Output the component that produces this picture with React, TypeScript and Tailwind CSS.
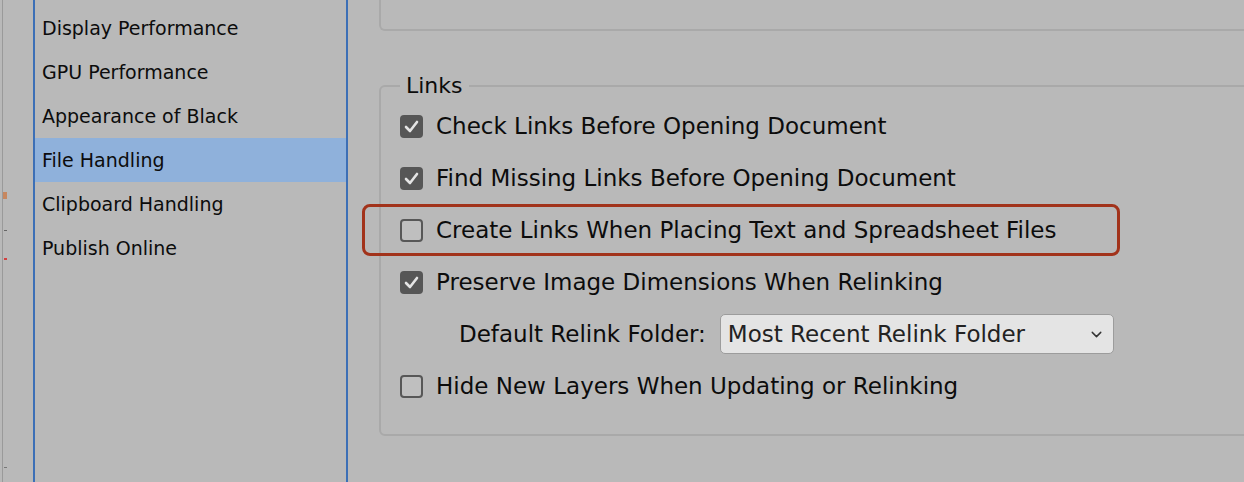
import { ChevronDown } from "lucide-react";

const sections = [
  "Display Performance",
  "GPU Performance",
  "Appearance of Black",
  "File Handling",
  "Clipboard Handling",
  "Publish Online",
];

function CheckBox({ checked }: { checked?: boolean }) {
  return checked ? (
    <span className="w-[23px] h-[23px] rounded-[4px] bg-[#565656] flex items-center justify-center shrink-0">
      <svg width="15" height="13" viewBox="0 0 15 13" fill="none">
        <path d="M2 7 L6 11 L13 2" stroke="#e4e4e4" strokeWidth="2.6" strokeLinecap="round" strokeLinejoin="round" />
      </svg>
    </span>
  ) : (
    <span className="w-[23px] h-[23px] rounded-[4px] border-2 border-[#575757] bg-[#bfbfbf] shrink-0" />
  );
}

function Option({ checked, label, marked }: { checked?: boolean; label: string; marked?: boolean }) {
  return (
    <div className="relative flex items-center h-[52px] gap-[13px]">
      <CheckBox checked={checked} />
      <span>{label}</span>
      {/* annotation box drawn over the row */}
      {marked && (
        <span className="absolute left-[-38px] top-0 w-[758px] h-[52px] border-[3px] border-[#a2331b] rounded-[8px]" />
      )}
    </div>
  );
}

export default function App() {
  return (
    <div
      className="w-[1244px] h-[482px] bg-[#b9b9b9] flex overflow-hidden text-[#0c0c0c]"
      style={{ fontFamily: '"DejaVu Sans", "Liberation Sans", sans-serif' }}
    >
      {/* left window edge */}
      <div className="w-[33px] shrink-0 flex flex-col">
        <div className="ml-[2px] w-px h-full bg-[#9a9a9a] relative">
          <span className="absolute left-[1px] top-[192px] w-[4px] h-[7px] bg-[#c7875f]" />
          <span className="absolute left-[2px] top-[230px] w-[3px] h-px bg-[#666]" />
          <span className="absolute left-[2px] top-[258px] w-[3px] h-[2px] bg-[#d24040]" />
          <span className="absolute left-[2px] top-[467px] w-[3px] h-px bg-[#777]" />
        </div>
      </div>

      {/* sidebar list */}
      <div className="w-[315px] shrink-0 border-x-2 border-[#3c6fb6] pt-[6px]">
        {sections.map((s) => (
          <div
            key={s}
            className={`h-[44px] flex items-center pl-[7px] text-[19px] ${s === "File Handling" ? "bg-[#8fb1db]" : ""}`}
          >
            {s}
          </div>
        ))}
      </div>

      {/* content */}
      <div className="flex-1 pl-[31px] overflow-hidden">
        <div className="w-[900px] h-[31px] border-l-2 border-b-2 border-[#a9a9a9] rounded-bl-[6px]" />

        <fieldset className="mt-[43px] w-[900px] h-[362px] border-2 border-[#a9a9a9] rounded-[6px] pl-[19px] text-[23px]">
          <legend className="px-[6px] text-[22px] leading-[24px]">Links</legend>
          <div className="pt-[2px]">
            <Option checked label="Check Links Before Opening Document" />
            <Option checked label="Find Missing Links Before Opening Document" />
            <Option marked label="Create Links When Placing Text and Spreadsheet Files" />
            <Option checked label="Preserve Image Dimensions When Relinking" />
            <div className="flex items-center h-[52px] pl-[59px] gap-[14px]">
              <span>Default Relink Folder:</span>
              <div className="w-[394px] h-[40px] rounded-[5px] border border-[#9c9c9c] bg-[#e4e4e4] flex items-center justify-between pl-[7px] pr-[8px] text-[#222]">
                <span>Most Recent Relink Folder</span>
                <ChevronDown size={17} strokeWidth={2} className="text-[#333]" />
              </div>
            </div>
            <Option label="Hide New Layers When Updating or Relinking" />
          </div>
        </fieldset>
      </div>
    </div>
  );
}
